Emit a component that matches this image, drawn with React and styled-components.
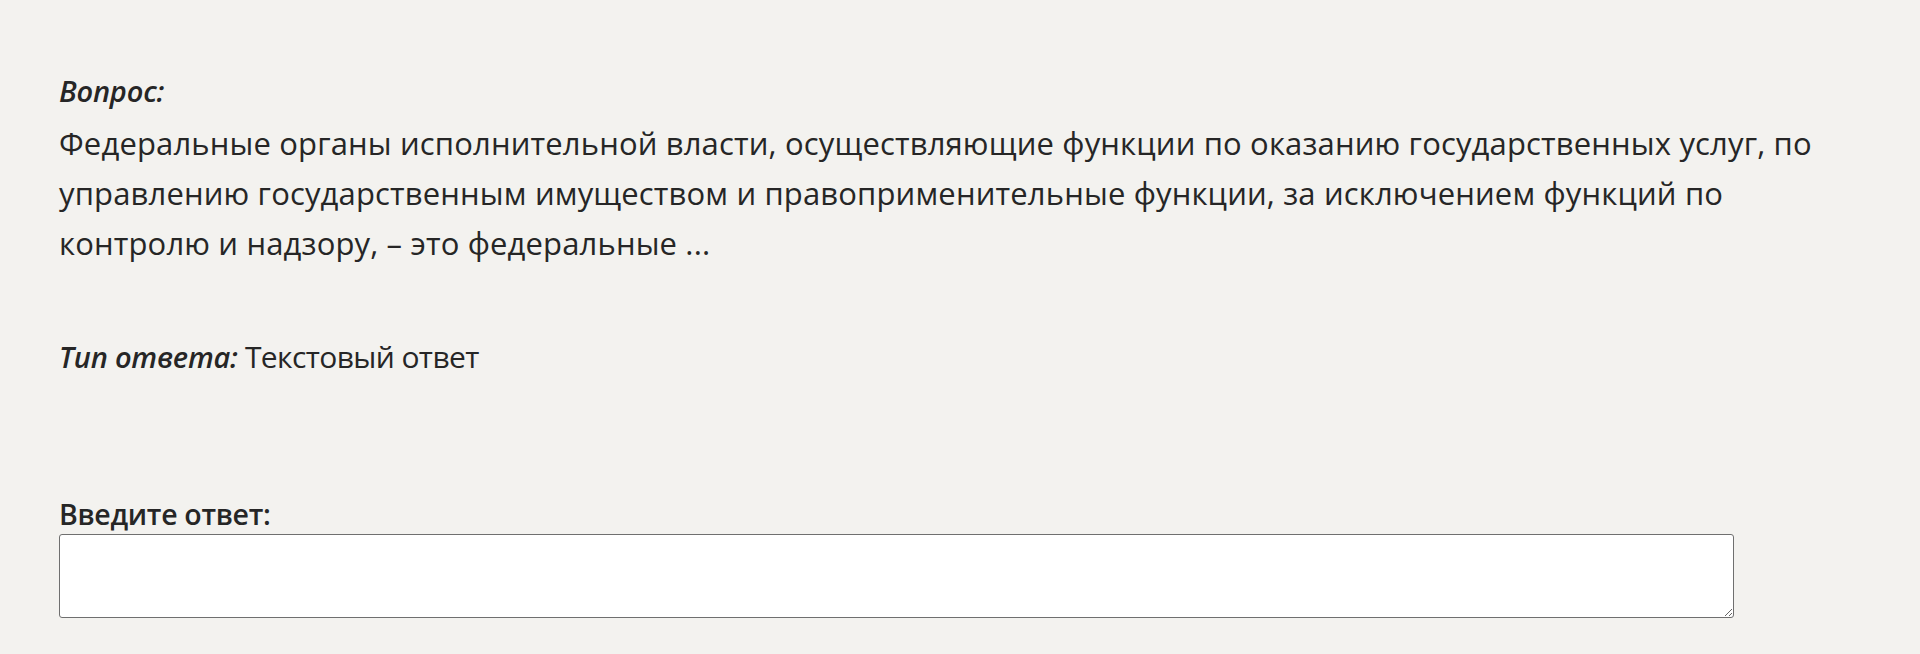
import { createGlobalStyle } from "styled-components";
import styled from "styled-components";

const GlobalStyle = createGlobalStyle`
    html, body {
        margin: 0;
        background: #f3f2ef;
    }

    body {
        font-family: "Open Sans", "Noto Sans", sans-serif;
        color: #262626;
    }
`;

const Page = styled.main`
    padding: 66px 59px 40px;
    min-height: 100vh;
    box-sizing: border-box;
`;

const Block = styled.section`
    margin-top: ${({ gap }) => gap || 0}px;
`;

const Caption = styled.span`
    font-weight: 600;
    font-style: italic;
    font-size: 29px;
    letter-spacing: -0.2px;
`;

const QuestionText = styled.p`
    margin: 2px 0 0;
    max-width: 1770px;
    font-size: 31px;
    line-height: 50px;
    letter-spacing: 0.15px;
`;

const Row = styled.div`
    font-size: 30px;
    line-height: 50px;
    letter-spacing: -0.6px;
`;

const AnswerLabel = styled.label`
    display: block;
    font-size: 28.5px;
    font-weight: 600;
    letter-spacing: -0.3px;
    line-height: 40px;
`;

const AnswerBox = styled.textarea`
    display: block;
    width: 1675px;
    height: 84px;
    box-sizing: border-box;
    border: 1px solid #6f6f6f;
    border-radius: 3px;
    background: #fff;
    font: inherit;
    font-size: 20px;
`;

export default function App() {
    return (
        <>
            <GlobalStyle />
            <Page>
                <Block>
                    <Row><Caption>Вопрос:</Caption></Row>
                    <QuestionText>
                        Федеральные органы исполнительной власти, осуществляющие функции по оказанию
                        государственных услуг, по управлению государственным имуществом и
                        правоприменительные функции, за исключением функций по контролю и надзору, – это
                        федеральные ...
                    </QuestionText>
                </Block>
                <Block gap={64}>
                    <Row><Caption>Тип ответа:</Caption> Текстовый ответ</Row>
                </Block>
                <Block gap={112}>
                    <AnswerLabel htmlFor="answer">Введите ответ:</AnswerLabel>
                    <AnswerBox id="answer" />
                </Block>
            </Page>
        </>
    );
}
